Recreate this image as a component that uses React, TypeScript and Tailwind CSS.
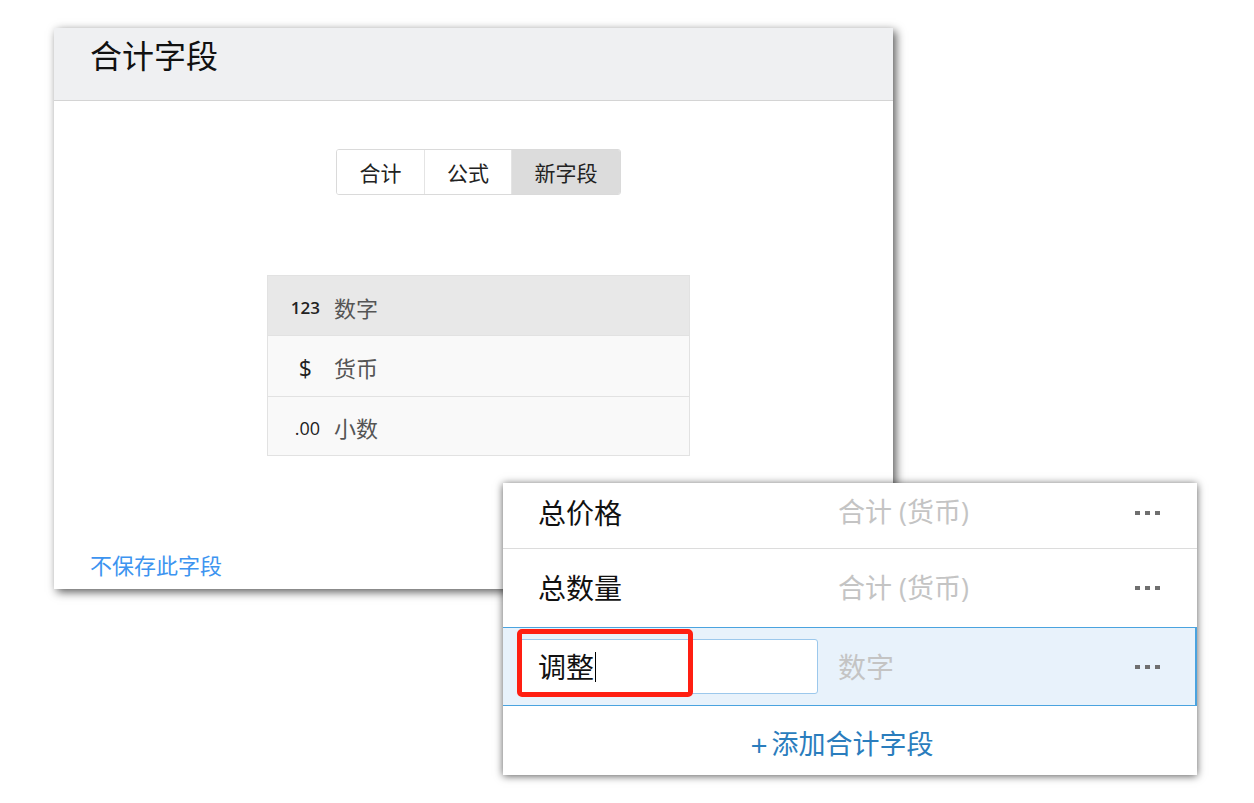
const FONT = "font-['Open_Sans','Noto_Sans_CJK_SC',sans-serif]";

const TABS = [
  { label: "合计", w: "w-[87px]", active: false },
  { label: "公式", w: "w-[87px]", active: false },
  { label: "新字段", w: "w-[109px]", active: true },
];

const TYPES = [
  { icon: "123", iconCls: "text-[17px] font-semibold text-[#222]", label: "数字", h: "h-[59px]", bg: "bg-[#e8e8e8]" },
  { icon: "$", iconCls: "text-[23px] text-[#222] pr-[8px]", label: "货币", h: "h-[61px]", bg: "bg-[#f9f9f9]" },
  { icon: ".00", iconCls: "text-[18px] text-[#222]", label: "小数", h: "h-[59px]", bg: "bg-[#f9f9f9]" },
];

function Dots() {
  return (
    <div className="flex gap-[5px]">
      <span className="h-[4px] w-[5px] bg-[#6f6f6f]" />
      <span className="h-[4px] w-[5px] bg-[#6f6f6f]" />
      <span className="h-[4px] w-[5px] bg-[#6f6f6f]" />
    </div>
  );
}

function FieldEditor() {
  return (
    <div className="absolute left-[54px] top-[28px] flex h-[561px] w-[839px] flex-col bg-white shadow-[3px_3px_9px_rgba(0,0,0,0.65)]">
      <div className="flex h-[73px] items-center border-b border-[#d4d4d4] bg-[#eff0f2] px-[36px] pb-[16px]">
        <h1 className="text-[32px] font-normal text-[#111]">合计字段</h1>
      </div>
      <div className="flex flex-1 flex-col items-center pl-[10px]">
        <div className="mt-[48px] flex h-[46px] overflow-hidden rounded-[3px] border border-[#dadada]">
          {TABS.map((t, i) => (
            <div
              key={t.label}
              className={`flex items-center justify-center pt-[3px] text-[21px] text-[#222] ${t.w} ${
                i > 0 ? "border-l border-[#e4e4e4]" : ""
              } ${t.active ? "bg-[#dcdcdc]" : "bg-white"}`}
            >
              {t.label}
            </div>
          ))}
        </div>
        <div className="mt-[80px] w-[423px] border border-[#e2e2e2]">
          {TYPES.map((t, i) => (
            <div
              key={t.label}
              className={`flex items-center pt-[5px] ${t.h} ${t.bg} ${i > 0 ? "border-t border-[#e2e2e2]" : ""}`}
            >
              <span className={`w-[52px] text-right ${t.iconCls}`}>{t.icon}</span>
              <span className="ml-[14px] text-[22px] text-[#555]">{t.label}</span>
            </div>
          ))}
        </div>
      </div>
      <a className="mb-[7px] ml-[36px] cursor-pointer text-[22px] text-[#3d94f0]">不保存此字段</a>
    </div>
  );
}

function SummaryList() {
  return (
    <div className="absolute left-[503px] top-[483px] flex h-[292px] w-[694px] flex-col bg-white shadow-[0_1px_8px_rgba(0,0,0,0.65)]">
      <div className="flex h-[66px] items-center border-b border-[#dcdcdc] pb-[6px] pl-[35px] pr-[37px]">
        <span className="w-[300px] text-[28px] font-normal text-[#111]">总价格</span>
        <span className="flex-1 text-[27px] text-[#c4c4c4]">合计 (货币)</span>
        <Dots />
      </div>
      <div className="flex h-[78px] items-center pl-[35px] pr-[37px]">
        <span className="w-[300px] text-[28px] font-normal text-[#111]">总数量</span>
        <span className="flex-1 text-[27px] text-[#c4c4c4]">合计 (货币)</span>
        <Dots />
      </div>
      <div className="flex h-[79px] items-center border-y border-r-2 border-[#4aa3df] bg-[#e8f2fb] pl-[16px] pr-[35px]">
        <div className="relative">
          <div className="flex h-[55px] w-[299px] items-center rounded-[3px] border border-[#9cc8ec] bg-white pl-[18px]">
            <span className="text-[28px] text-[#111]">调整</span>
            <span className="ml-[1px] h-[30px] w-[1px] bg-black" />
          </div>
          <div className="absolute left-[-2px] top-[-10px] h-[68px] w-[176px] rounded-[5px] border-[5px] border-[#ff1f12]" />
        </div>
        <span className="ml-[20px] flex-1 text-[28px] text-[#c4c4c4]">数字</span>
        <Dots />
      </div>
      <div className="flex flex-1 items-center justify-center pr-[16px] pt-[8px] text-[27px] text-[#2a7dbd]">
        <span className="mr-[4px] text-[30px] leading-none">+</span>
        添加合计字段
      </div>
    </div>
  );
}

export default function App() {
  return (
    <div className={`relative h-[803px] w-[1254px] overflow-hidden bg-white ${FONT}`}>
      <FieldEditor />
      <SummaryList />
    </div>
  );
}
